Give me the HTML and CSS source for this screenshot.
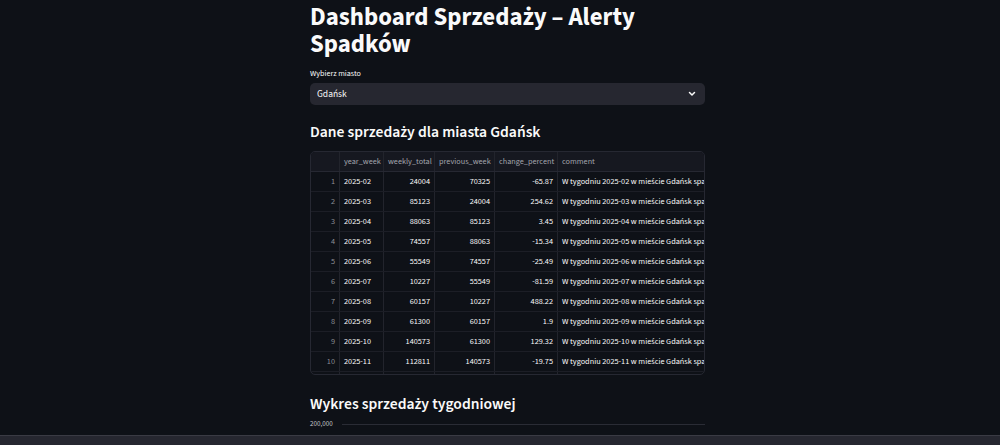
FILE: index.html
```html
<!DOCTYPE html>
<html lang="pl">
<head>
    <meta charset="UTF-8">
    <meta name="viewport" content="width=device-width, initial-scale=1.0">
    <title>Dashboard Sprzedaży</title>
    <link rel="stylesheet" href="styles.css">
</head>
<body>

    <div class="main">
        <!-- Page title -->
        <h1 class="page-title">Dashboard Sprzedaży – Alerty Spadków</h1>

        <!-- City select -->
        <label class="field-label">Wybierz miasto</label>
        <div class="select-box">
            <span>Gdańsk</span>
            <svg class="chevron" width="10" height="10" viewBox="0 0 10 10">
                <path d="M2.5 3.5 L5 6 L7.5 3.5" fill="none" stroke="#fafafa" stroke-width="1.5" stroke-linecap="round" stroke-linejoin="round"/>
            </svg>
        </div>

        <h2 class="section-title">Dane sprzedaży dla miasta Gdańsk</h2>

        <!-- Data table -->
        <div class="table-wrap">
            <table class="data-table">
                <thead>
                    <tr>
                        <th class="col-idx"></th>
                        <th class="col-week">year_week</th>
                        <th class="col-total">weekly_total</th>
                        <th class="col-prev">previous_week</th>
                        <th class="col-change">change_percent</th>
                        <th class="col-comment">comment</th>
                    </tr>
                </thead>
                <tbody id="rows"></tbody>
            </table>
        </div>

        <h2 class="section-title chart-title">Wykres sprzedaży tygodniowej</h2>

        <!-- Chart (only the top gridline is visible) -->
        <div class="chart">
            <span class="axis-label">200,000</span>
            <div class="grid-line"></div>
        </div>
    </div>

    <!-- Bottom bar -->
    <div class="bottom-bar"></div>

    <script>
        const data = [
            ['2025-02', 24004, 70325, '-65.87'],
            ['2025-03', 85123, 24004, '254.62'],
            ['2025-04', 88063, 85123, '3.45'],
            ['2025-05', 74557, 88063, '-15.34'],
            ['2025-06', 55549, 74557, '-25.49'],
            ['2025-07', 10227, 55549, '-81.59'],
            ['2025-08', 60157, 10227, '488.22'],
            ['2025-09', 61300, 60157, '1.9'],
            ['2025-10', 140573, 61300, '129.32'],
            ['2025-11', 112811, 140573, '-19.75'],
            ['2025-12', 98250, 112811, '-12.91']
        ];

        const tbody = document.getElementById('rows');

        // Build table rows
        data.forEach((row, i) => {
            const tr = document.createElement('tr');
            tr.innerHTML = `
                <td class="col-idx">${i + 1}</td>
                <td class="col-week">${row[0]}</td>
                <td class="num">${row[1]}</td>
                <td class="num">${row[2]}</td>
                <td class="num">${row[3]}</td>
                <td class="col-comment">W tygodniu ${row[0]} w mieście Gdańsk spadek</td>
            `;
            tbody.appendChild(tr);
        });
    </script>

</body>
</html>
```

FILE: styles.css
```css
/* General styles */
body {
    font-family: 'Source Sans 3', 'Source Sans Pro', 'Lato', sans-serif;
    margin: 0;
    padding: 0;
    background-color: #0e1117;
    color: #fafafa;
    overflow: hidden;
}

.main {
    width: 395px;
    margin-left: 310px;
}

/* Title */
.page-title {
    font-size: 24.8px;
    line-height: 27px;
    font-weight: 700;
    margin: 0;
    padding-top: 4px;
}

/* Select */
.field-label {
    display: block;
    font-size: 8px;
    margin-top: 9px;
    height: 13px;
    line-height: 13px;
}

.select-box {
    display: flex;
    align-items: center;
    justify-content: space-between;
    height: 22px;
    margin-top: 3px;
    padding: 0 8px 0 7px;
    background-color: #262730;
    border-radius: 5px;
    font-size: 9.5px;
}

.chevron {
    display: block;
}

/* Section headings */
.section-title {
    font-size: 15.6px;
    font-weight: 600;
    line-height: 24px;
    margin: 15px 0 7px;
}

/* Table */
.table-wrap {
    height: 222px;
    border: 1px solid #262832;
    border-radius: 5px;
    overflow: hidden;
}

.data-table {
    border-collapse: collapse;
    table-layout: fixed;
    width: 420px;
    font-size: 8.2px;
}

.data-table th,
.data-table td {
    height: 19px;
    padding: 0 4px;
    border-right: 1px solid #22242c;
    border-bottom: 1px solid #1c1e26;
    white-space: nowrap;
    overflow: hidden;
    text-align: left;
    font-weight: 400;
}

.data-table th {
    background-color: #161820;
    color: #a3a5ad;
    border-bottom-color: #262832;
}

.data-table td.col-idx {
    text-align: right;
    color: #8c8e95;
}

.data-table td.num {
    text-align: right;
}

.col-idx { width: 20px; }
.col-week { width: 35px; }
.col-total { width: 42px; }
.col-prev { width: 51px; }
.col-change { width: 54px; }
.col-comment { width: 200px; }

/* Chart */
.chart-title {
    margin-top: 17px;
    margin-bottom: 3px;
}

.chart {
    display: flex;
    align-items: center;
    gap: 9px;
}

.axis-label {
    font-size: 7px;
    color: #c4c6cc;
}

.grid-line {
    flex: 1;
    height: 1px;
    background-color: #2a2c35;
}

/* Bottom bar */
.bottom-bar {
    position: fixed;
    left: 0;
    right: 0;
    bottom: 0;
    height: 9px;
    background-color: #262730;
    border-top: 1px solid #3a3b44;
}
```
